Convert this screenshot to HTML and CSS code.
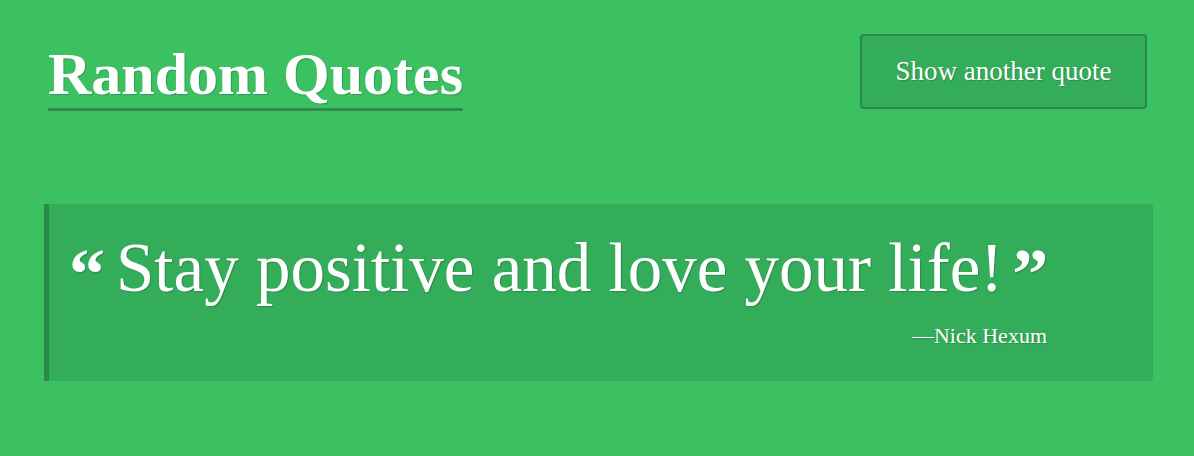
FILE: index.html
```html
<!DOCTYPE html>
<html lang="en">
<head>
<meta charset="utf-8">
<title>Random Quotes</title>
<link rel="stylesheet" href="styles.css">
</head>
<body>
<div class="page">
  <header class="header">
    <h1 class="title">Random Quotes</h1>
    <button class="btn" type="button">Show another quote</button>
  </header>
  <blockquote class="quote">
    <p class="quote-text"><span class="mark mark-open">&ldquo;</span>Stay positive and love your life!<span class="mark mark-close">&rdquo;</span></p>
    <p class="author">&mdash;Nick Hexum</p>
  </blockquote>
</div>
</body>
</html>
```
FILE: styles.css
```css
html, body {
  margin: 0;
  padding: 0;
  background: #3bc162;
  color: #fff;
  font-family: "Liberation Serif", "DejaVu Serif", serif;
}
.page {
  padding: 34px 41px 0 44px;
}
.header {
  display: flex;
  justify-content: space-between;
  align-items: flex-start;
  padding: 0 6px 0 4px;
}
.title {
  margin: 0;
  margin-top: 9px;
  padding-bottom: 3px;
  font-size: 60px;
  line-height: 62px;
  font-weight: 700;
  border-bottom: 3px solid #2e8b4c;
  text-shadow: 1px 1px 1px rgba(0,0,0,0.2);
}
.btn {
  width: 287px;
  height: 75px;
  padding: 0;
  background: #34ad5a;
  border: 2px solid #2a8a47;
  border-radius: 4px;
  color: #fff;
  font-family: inherit;
  font-size: 27px;
  text-shadow: 1px 1px 1px rgba(0,0,0,0.2);
}
.quote {
  margin: 93px 0 0 0;
  background: #34ad5a;
  border-left: 5px solid #2a8a47;
  border-radius: 0 3px 3px 0;
  padding: 24px 20px 0 20px;
  height: 153px;
}
.quote-text {
  margin: 0;
  font-size: 69px;
  line-height: 80px;
  text-shadow: 1px 1px 1px rgba(0,0,0,0.2);
}
.mark {
  font-weight: 700;
  font-size: 72px;
  vertical-align: top;
  line-height: 1;
  position: relative;
  top: 10px;
}
.mark-open { margin-right: 11px; margin-left: 0; }
.mark-close { margin-left: 9px; }
.author {
  margin: 15px 0 0 0;
  text-align: right;
  padding-right: 86px;
  font-size: 22px;
  text-shadow: 1px 1px 1px rgba(0,0,0,0.2);
}
```
